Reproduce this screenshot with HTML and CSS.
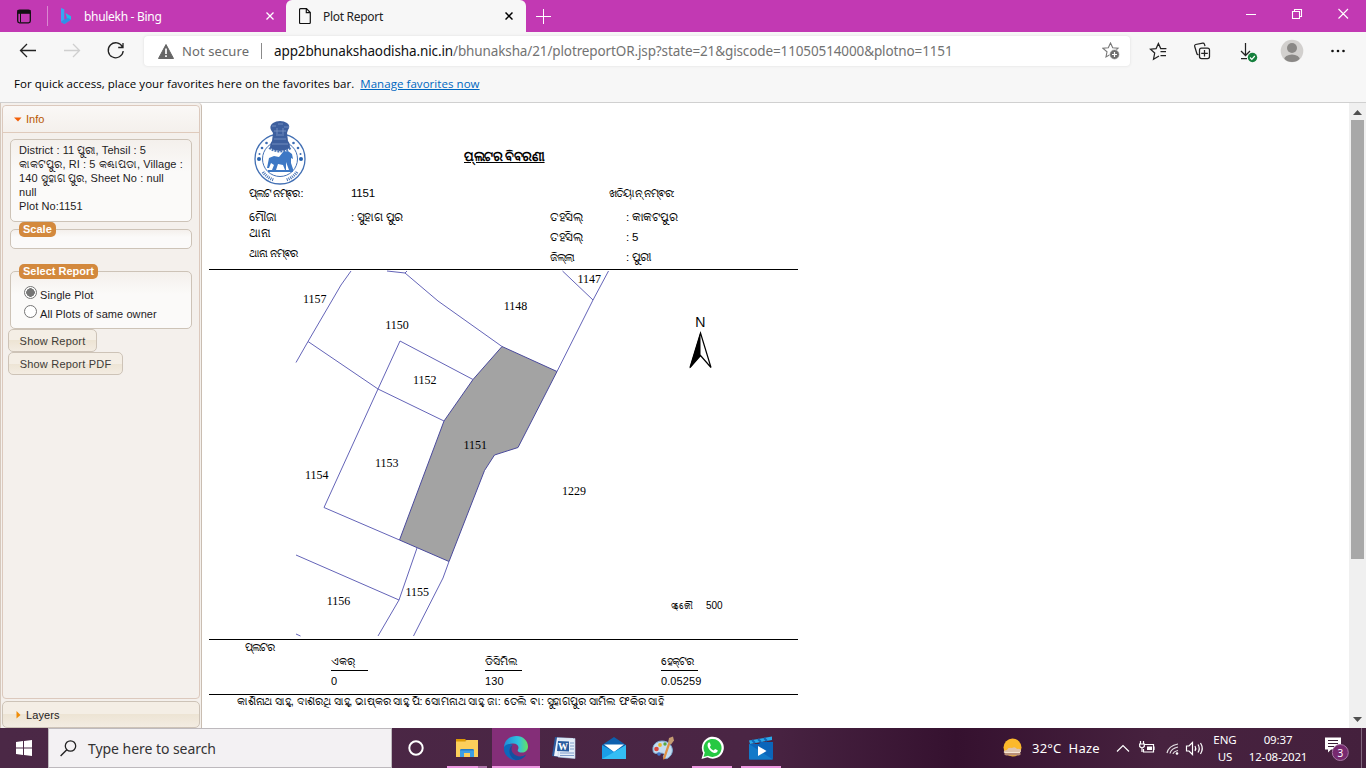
FILE: index.html
```html
<!DOCTYPE html>
<html lang="en">
<head>
<meta charset="utf-8">
<title>Plot Report</title>
<link rel="stylesheet" href="styles.css">
</head>
<body>
<div class="screen">
  <header class="tabs">
    <svg class="tab-actions" width="44" height="32" viewBox="0 0 44 32"><rect x="17.700" y="10.200" width="12.600" height="12.600" rx="1.800" fill="none" stroke="#111" stroke-width="1.300"/><path d="M17.500 10h13v3.800h-13z" fill="#111"/><path d="M20.500 13v9.500" stroke="#111"/></svg>
    <div class="tab tab-idle">
      <svg width="12" height="17" viewBox="0 0 12 17"><path d="M1 0l3.300 1.300v10.200L1 14z" fill="#38a5f3"/><path d="M5.500 5l5.500 3.200v3.300l-6.500 4.500L1 14l6-3.600z" fill="#24b8e8"/><path d="M1 14l3.300-2.500L8 10l3 1.500L4.500 16z" fill="#2f8fe8"/></svg>
      <span class="tab-title t-bing">bhulekh - Bing</span>
      <svg class="x" width="8" height="8" viewBox="0 0 8 8"><path d="M.5.5l7 7M7.500.5l-7 7" stroke="#fff" stroke-width="1.300"/></svg>
    </div>
    <div class="tab tab-open">
      <svg width="12" height="16" viewBox="0 0 12 16"><path d="M1.500.7h6l3.800 3.800v10a1 1 0 0 1-1 1h-8.800a1 1 0 0 1-1-1V1.700a1 1 0 0 1 1-1zM7.300.7v4h4" fill="none" stroke="#111" stroke-width="1.200"/></svg>
      <span class="tab-title t-plot">Plot Report</span>
      <svg class="x" width="8" height="8" viewBox="0 0 8 8"><path d="M.5.5l7 7M7.500.5l-7 7" stroke="#000" stroke-width="1.500"/></svg>
    </div>
    <svg class="newtab" width="15" height="15" viewBox="0 0 15 15"><path d="M7.500 0v15M0 7.500h15" stroke="#fff"/></svg>
    <svg class="winctl" width="104" height="12" viewBox="0 0 104 12"><g fill="none" stroke="#fff" stroke-width="1.100"><path d="M0 6.500h10M46.500 3.500h7v7h-7zM48.500 3.500v-2h7v7h-2M92.500 1l9.500 9.500M102 1l-9.500 9.500"/></g></svg>
  </header>

  <nav class="toolbar">
    <svg class="navicons" width="144" height="38" viewBox="0 0 144 38"><g fill="none" stroke-width="1.300"><path d="M36 18.500H20.500M27 12l-6.500 6.500L27 25" stroke="#222"/><path d="M64 18.500h15.500M73 12l6.500 6.500L73 25" stroke="#cfcfcf"/><path d="M122.500 15a7.500 7.500 0 1 0 .7 4M123 11v4.500h-4.800" stroke="#222"/></g></svg>
    <div class="address">
      <svg width="16" height="15" viewBox="0 0 16 15"><path d="M8 .5L15.500 14.500H.5z" fill="#666" stroke="#666" stroke-linejoin="round"/><path d="M8 4.500v5.500M8 11.200v1.800" stroke="#fff" stroke-width="1.700"/></svg>
      <span class="notsecure">Not secure</span><i class="bar"></i>
      <span class="url"><b>app2bhunakshaodisha.nic.in</b>/bhunaksha/21/plotreportOR.jsp?state=21&amp;giscode=11050514000&amp;plotno=1151</span>
      <svg class="addfav" width="18" height="18" viewBox="0 0 18 18"><path d="M8.500 1l2.200 4.800 5.300.5-3.900 3.500 1 5-4.600-2.500L4 15l1-5.200L1 6.300l5.300-.5z" fill="none" stroke="#777" stroke-width="1.100"/><circle cx="12.500" cy="12.500" r="4.900" fill="#6e6e6e" stroke="#fff" stroke-width=".7"/><path d="M12.500 10v5M10 12.500h5" stroke="#fff" stroke-width="1.200"/></svg>
    </div>
    <svg class="toolicons" width="220" height="38" viewBox="1140 32 220 38"><g fill="none" stroke="#222" stroke-width="1.250">
      <path d="M1159 56l-5.500 3.200 1.200-6.200-4.200-3.800 5.600-.6 2.300-5 2.300 5h5.700M1160.500 51.500h5.500M1160.500 55.500h5.500"/>
      <path d="M1198.500 55l-1.500-1-2.300-7.500q-.5-1.500 1-2l7-1.400q1.300-.2 1.700 1l.6 2"/><rect x="1199.500" y="48" width="10" height="10.500" rx="2"/><path d="M1204.500 50v6.500M1201.200 53.300h6.600"/>
      <path d="M1245.500 43v12M1241 51l4.500 4.500 4.500-4.500M1241 58.500h6"/></g>
      <circle cx="1252.500" cy="57.500" r="4.700" fill="#15803d"/><path d="M1250 57.500l1.800 1.800 3-3.300" fill="none" stroke="#fff" stroke-width="1.200"/>
      <clipPath id="av"><circle cx="1292" cy="51" r="11"/></clipPath><circle cx="1292" cy="51" r="11.300" fill="#d2d0ce"/><g clip-path="url(#av)" fill="#8a8886"><circle cx="1292" cy="48" r="5"/><ellipse cx="1292" cy="60" rx="8" ry="5.600"/></g>
      <g fill="#111"><circle cx="1332.500" cy="51" r="1.300"/><circle cx="1338" cy="51" r="1.300"/><circle cx="1343.500" cy="51" r="1.300"/></g></svg>
  </nav>
  <div class="favbar"><span class="favtext">For quick access, place your favorites here on the favorites bar.</span><a class="favlink">Manage favorites now</a></div>

  <main class="page">
    <aside class="side">
      <section class="panel">
        <h3 class="panel-head"><svg width="8" height="5" viewBox="0 0 8 5"><path d="M0 .5h7.500L4 4.500z" fill="#f35f07"/></svg><span>Info</span></h3>
        <div class="box info">District : 11 ପୁରୀ, Tehsil : 5<br>କାକଟପୁର, RI : 5 କଣ୍ଢାପଡା, Village :<br>140 ସୁହାଗ ପୁର, Sheet No : null<br>null<br>Plot No:1151</div>
        <div class="box scale"><span class="legend">Scale</span></div>
        <div class="box select"><span class="legend">Select Report</span>
          <label class="opt"><i class="radio on"></i><span>Single Plot</span></label>
          <label class="opt"><i class="radio"></i><span>All Plots of same owner</span></label>
        </div>
        <button class="btn b1">Show Report</button>
        <button class="btn b2">Show Report PDF</button>
      </section>
      <h3 class="layers"><svg width="5" height="8" viewBox="0 0 5 8"><path d="M.5 0v7.500L4.500 4z" fill="#ef8c08"/></svg><span>Layers</span></h3>
    </aside>

    <article class="report">
      <div class="head">
        <div class="top">
          <svg class="emblem" width="60" height="68" viewBox="0 0 60 68"><g fill="none" stroke="#4370b4"><circle cx="31" cy="39" r="25" stroke-width="1.300"/><circle cx="31" cy="39" r="17.500"/></g><g fill="#3b6cb4"><circle cx="17.500" cy="23" r="1.300"/><circle cx="13" cy="28" r="1.300"/><circle cx="10.500" cy="34" r="1"/><circle cx="44.500" cy="23" r="1.300"/><circle cx="49" cy="28" r="1.300"/><circle cx="51.500" cy="34" r="1"/></g><path d="M14 52a21 21 0 0 0 11 8M48 52a21 21 0 0 1-11 8" fill="none" stroke="#4773b5" stroke-width="3" stroke-dasharray="1 1"/>
          <path d="M24 3q3-2 7-2t7 2q4 3 1 7l-1 3 1 8q2 2 2 7-10 6-20 0 0-5 2-7l1-8-2-3q-2-4 2-7z" fill="#3d5f9e"/><path d="M23 6h4M29 4h5M35 7h5M25 11h12M27 15h8M25 19h12M23 24h16M28 8v6M34 8v6" stroke="#7d97c6" stroke-width=".8"/><path d="M20 28q11 7 22 0" fill="none" stroke="#4773b5" stroke-width="2" stroke-dasharray="2 1"/>
          <path d="M20 38l5-2 5 1 4-5 5-1 4 3 1 5-2-1v5l2 6v3H19v-2h4l2-5-3-2-2 5h-2zM29 44l-2 6h9l-2-5zM37 42v8h3z" fill="#3d78c5" fill-rule="evenodd"/><circle cx="10" cy="39" r="2" fill="#2862ae"/><circle cx="52" cy="39" r="2" fill="#2862ae"/></svg>
          <h1 class="title">ପ୍ଲଟର ବିବରଣୀ</h1>
        </div>
        <div class="plot"><span class="c1 tighter">ପ୍ଲଟ ନମ୍ଵର :</span><span class="c2 en">1151</span><span class="c3 tight">ଖତିୟାନ୍ ନମ୍ଵର:</span></div>
        <div class="details">
          <dl class="left"><dt>ମୌଜା</dt><dd>: ସୁହାଗ ପୁର</dd><dt>ଥାନା</dt><dd></dd><dt class="tight">ଥାନା ନମ୍ଵର</dt><dd></dd></dl>
          <dl class="right"><dt>ତହସିଲ୍</dt><dd>: କାକଟପୁର</dd><dt>ତହସିଲ୍</dt><dd class="en">: 5</dd><dt class="tighter">ଜିଲ୍ଲା</dt><dd>: ପୁରୀ</dd></dl>
        </div>
      </div>
      <svg class="map" width="589" height="369" viewBox="209 270 589 369">
        <path d="M502 346.500L557 371.500 518 447.500 494.500 455 484.500 470.500 449 561.500 399.500 540 444 421 473 379.500z" fill="#a3a3a3" stroke="#4a4a9c"/>
        <g fill="none" stroke="#6464b8">
          <path d="M351 271L341 285 308 341.500 296 362.500M308 341.500L378 389 444 421M387 271L405 273 407 271M405 273L438 301 502 346.500M473 379.500L400 341 378 389 324 507.500 399.500 540M562.500 271L593 300M608.500 271L593 300 557 371.500M417 548L399 600 378 636M296 555L399 600M449 561.500L443 578 413.500 636M296 634L300.500 636"/>
        </g>
        <g class="nums"><text x="303" y="303">1157</text><text x="385.300" y="329">1150</text><text x="503.800" y="309.500">1148</text><text x="577.500" y="282.500">1147</text><text x="413" y="384">1152</text><text x="463.500" y="449">1151</text><text x="375" y="467">1153</text><text x="305" y="479">1154</text><text x="562" y="495">1229</text><text x="405.500" y="596">1155</text><text x="326.800" y="605">1156</text></g>
        <text class="north" x="695" y="327">N</text>
        <path d="M700.500 333L711 367.500 700.500 355.500 690 367.500z" fill="#fff" stroke="#000" stroke-width="1.200"/><path d="M700.500 332v23.500L689.500 368.500z"/>
        <text class="scaletxt od" x="671" y="609">ସ୍କେୌ</text><text class="scaletxt" x="706" y="609">500</text>
      </svg>
      <div class="area">
        <div class="area-title tighter">ପ୍ଲଟର</div>
        <div class="cols">
          <div class="col"><span class="cap">ଏକର୍</span><span class="val">0</span></div>
          <div class="col"><span class="cap">ଡିସିମିଲ</span><span class="val">130</span></div>
          <div class="col"><span class="cap hect">ହେକ୍ଟର</span><span class="val">0.05259</span></div>
        </div>
      </div>
      <p class="owners">କାଶିନାଥ ସାହୁ, ଦାଶରଥି ସାହୁ, ଭାଷ୍କର ସାହୁ ପି: ସୋମନାଥ ସାହୁ ଜା: ତେଲି ବା: ସୁହାଗପୁର ସାମିଲ ଫକିର ସାହି</p>
    </article>

    <div class="scroll"><svg width="9" height="5" viewBox="0 0 9 5"><path d="M0 5L4.500 0 9 5z" fill="#505050"/></svg><i class="thumb"></i><svg class="down" width="9" height="5" viewBox="0 0 9 5"><path d="M0 0h9L4.500 5z" fill="#505050"/></svg></div>
  </main>

  <footer class="taskbar">
    <div class="start"><svg width="16" height="16" viewBox="0 0 16 16"><path d="M0 2l7-1v6.500H0zM8 1l8-1v7.500H8zM0 8.500h7V15l-7-1zM8 8.500h8V16l-8-1z" fill="#fff"/></svg></div>
    <div class="search"><svg width="17" height="17" viewBox="0 0 17 17"><circle cx="10.500" cy="6" r="5.200" fill="none" stroke="#222" stroke-width="1.300"/><path d="M6.800 9.700L.6 16" stroke="#222" stroke-width="1.400"/></svg><span>Type here to search</span></div>
    <div class="apps">
      <div class="app cortana"><svg width="18" height="18" viewBox="0 0 18 18"><circle cx="9" cy="9" r="6.700" fill="none" stroke="#fff" stroke-width="2"/></svg></div>
      <div class="app run files"><svg width="22" height="20" viewBox="0 0 22 20"><path d="M0 1h9l2 2h-2v4H0z" fill="#dc9a05"/><path d="M0 3.500h9L10.500 2H22v17H0z" fill="#fccf5b"/><path d="M4 19v-6.500q0-1.500 1.500-1.500h11q1.500 0 1.500 1.500V19h-4v-4H8v4z" fill="#3d9ee4"/><path d="M5.500 11h11q1.500 0 1.500 1.500H4q0-1.500 1.500-1.500z" fill="#277bc2"/></svg></div>
      <div class="app run edge"><svg width="26" height="26" viewBox="0 0 26 26"><defs><linearGradient id="e1" x1="0" x2="1"><stop offset="0" stop-color="#218bd8"/><stop offset=".6" stop-color="#2fc2df"/><stop offset="1" stop-color="#66e35f"/></linearGradient></defs><path d="M1 13C1 5 7 1 13.500 1 20 1 25 6 25 11.500c0 4-3 6-6 6-3.500 0-5-1.500-4-3 1.500-3-.5-6-5-6-4 0-7 2-9 4.500z" fill="url(#e1)"/><path d="M1 12c2-3 6-4 9-2-3 1-4 4-3 7 1.500 4.500 7 7 14 4-4 5-10 5-14 2.500C2.500 21 .5 17 1 12z" fill="#0c68bc"/><path d="M10 10c-2 2-2 6 0 8 3 4 9 4.500 13 1.500-1 3-6 6-10 5.500-7-2-9-11-3-15z" fill="#1450a0"/></svg></div>
      <div class="app word"><svg width="24" height="24" viewBox="0 0 24 24"><path d="M3 1L15 2v20L0 20z" fill="#2c5b9d"/><path d="M5 1.500l16 .5V22L2 20z" fill="#edf3fc"/><path d="M7 3l16-.5v20L6 21z" fill="#e5edf8" stroke="#b9cce6" stroke-width=".6"/><path d="M18 7h4M18 10h4M18 13h4M8 17h14M8 19.500h14" stroke="#7f9dcc"/><path d="M6 5l11 .5v10L5 15z" fill="#285a9e"/><text class="wordw" x="6" y="14">W</text></svg></div>
      <div class="app"><svg width="24" height="24" viewBox="0 0 24 24"><path d="M0 9l12-8 12 8-12 9z" fill="#0d60ae"/><path d="M2 8.500h20L12 16z" fill="#fff"/><path d="M0 9l12 7L24 9v14H0z" fill="#1b9de6"/><path d="M24 9v14H0l14-8z" fill="#34bdf4"/></svg></div>
      <div class="app"><svg width="24" height="24" viewBox="0 0 24 24"><path d="M2 14C1 7 9 3 16 6c7 4 7 12 1 16-3 2-6-1-4-3 1-2-3-2-6-2-3 1-5 0-5-3z" fill="#c5ddf1" stroke="#7cadd3"/><circle cx="5.500" cy="13" r="2.300" fill="#da473c"/><circle cx="9" cy="9" r="1.900" fill="#e9b82b"/><circle cx="14" cy="8" r="1.700" fill="#57a942"/><circle cx="8" cy="18" r="1.800" fill="#4077cf"/><path d="M19.500 7L14 23l-2 .5.500-3L17.500 6z" fill="#df9043"/><path d="M17 7l1-5 4-1.500 1 4-3 4z" fill="#c49b72"/></svg></div>
      <div class="app run"><svg width="24" height="24" viewBox="0 0 24 24"><path d="M1.500 23l1.700-6A11 11 0 1 1 7.500 21.300z" fill="#fff"/><path d="M3.500 21l1.300-4.500a9 9 0 1 1 3.200 3.200z" fill="#26c943"/><path d="M8.700 6.500c-3 2.500.5 8.500 4.800 10.300 2 .8 4.500-.8 4.200-2.500l-2.600-1.300-1.500 1.500c-2-.8-3-2-3.800-3.500l1-1.500-1-3z" fill="#fff"/></svg></div>
      <div class="app run"><svg width="24" height="24" viewBox="0 0 24 24"><path d="M0 4.500L23 .5V4L1 8z" fill="#29a9ea"/><path d="M3 4l3 3M9 3l3 3M15 2l3 3" stroke="#1266b8" stroke-width="2"/><path d="M0 8h10l2-2h12v16.500q0 1-1 1H1q-1 0-1-1z" fill="#0b65ba"/><path d="M0 8l24 15.500H1q-1 0-1-1z" fill="#127ac9"/><path d="M9 10v10l8.500-5z" fill="#fff"/></svg></div>
    </div>
    <div class="tray">
      <svg width="22" height="20" viewBox="0 0 22 20"><circle cx="10.500" cy="9.500" r="9" fill="#fcb92b"/><path d="M2 15q-1-3 3-3 1-3 5-2 3-2 5 1 4-1 4 2 0 2-3 2z" fill="#dfc5ae"/><path d="M4 17.500q-3-1-1-2.500h15q2 1.500-1 2.500z" fill="#b98f78"/><path d="M3 14.500h15" stroke="#f6e6d4"/></svg>
      <span class="weather">32°C&nbsp; Haze</span>
      <svg class="sys" width="90" height="18" viewBox="1115 739 90 18"><g fill="none" stroke="#fff" stroke-width="1.200"><path d="M1117 751.500l6-6 6 6M1144.500 744.500h9v7.500h-10v-3M1154 746.500v3.500"/><path d="M1139 744h6M1140.500 741v3M1143.500 741v3M1139.700 744v2.500q2.300 2.500 4.600 0V744M1142 748v4"/><path d="M1167 753q1.500-7 11-9M1170 753.500q1-5 8-6.500M1173 754q.5-2.500 5-3.500" opacity=".85"/><path d="M1186.500 746h2.500l3.500-3.500v12l-3.500-3.500h-2.500zM1195 746q1.500 2.500 0 5M1198 744.500q2.500 4 0 8M1200.500 743q3.500 5.500 0 11"/></g><path d="M1147 746.500h5v3.500h-5z" fill="#fff"/><circle cx="1177" cy="753.500" r="1.300" fill="#fff"/></svg>
      <span class="lang">ENG<br>US</span><span class="clock">09:37<br>12-08-2021</span>
      <svg class="notif" width="28" height="30" viewBox="1322 736 28 30"><path d="M1325 740.500h16v12h-10l-3 3v-3h-3z" fill="#fff"/><path d="M1328 743.500h10M1328 746.500h10M1328 749.500h6" stroke="#3a2038"/><circle cx="1340.300" cy="755.500" r="8" fill="#77296f" stroke="#a579a3"/><text x="1337.500" y="759.500" class="badge">3</text></svg>
      <i class="peek"></i>
    </div>
  </footer>
</div>
</body>
</html>
```
FILE: styles.css
```css
* { box-sizing: border-box; }
body { margin: 0; overflow: hidden; }
svg { display: block; flex: none; }
span { white-space: nowrap; }
i { display: block; flex: none; }
.screen { width: 1366px; height: 768px; display: flex; flex-direction: column; background: #f7f7f7; font-family: "Noto Sans", sans-serif; }

.tabs { height: 32px; flex: none; background: #c239b3; display: flex; align-items: center; }
.tab { display: flex; align-items: center; height: 32px; font-size: 12px; }
.tab-idle { width: 242px; color: #fff; padding: 0 12px 0 3px; }
.tab-idle::before { content: ""; width: 1px; height: 20px; background: #da88d1; margin-right: 12px; }
.tab-open { width: 240px; background: #f7f7f7; color: #222; border-radius: 6px 6px 0 0; padding: 0 13px; }
.tab-title { letter-spacing: -.3px; }
.t-bing { margin-left: 12px; }
.t-plot { margin-left: 12px; }
.x { margin-left: auto; }
.newtab { margin-left: 10px; }
.winctl { margin-left: auto; margin-right: 16px; margin-bottom: 4px; }

.toolbar { height: 38px; flex: none; display: flex; align-items: center; }
.address { width: 986px; height: 30px; background: #fff; border-radius: 4px; box-shadow: 0 0 3px #ddd; display: flex; align-items: center; padding: 0 10px 0 14px; margin-right: 10px; }
.notsecure { font-size: 13px; color: #6b6b6b; margin-left: 8px; width: 67px; letter-spacing: .1px; }
.bar { width: 1px; height: 16px; background: #8a8a8a; margin: 0 12px; }
.url { font-size: 13.500px; color: #737373; letter-spacing: -.12px; }
.url b { font-weight: 400; color: #111; }
.addfav { margin-left: auto; }
.favbar { height: 33px; flex: none; border-bottom: 1px solid #d0d0d0; display: flex; align-items: center; padding: 0 0 5px 14px; font-size: 11.500px; font-family: "Open Sans", sans-serif; font-weight: 500; color: #000; letter-spacing: .05px; }
.favlink { color: #0067c0; text-decoration: underline; margin-left: 6px; }

.page { height: 625px; flex: none; display: flex; background: #fff; font-family: "Liberation Sans", sans-serif; }
.side { width: 202px; background: #f4f0ec; padding: 2px 1px 0 1px; border-right: 1px solid #c9bdb1; border-left: 1px solid #d5c8bc; display: flex; flex-direction: column; border-top-right-radius: 4px; font-size: 11px; color: #1e1b1d; }
.panel { height: 594px; border: 1px solid #dcc9bd; border-radius: 4px; padding: 0 9px 0 7px; background: #f4f0ec; }
h3 { margin: 0; font-size: 11px; font-weight: 400; display: flex; align-items: center; }
.panel-head { height: 27px; margin: 0 -9px 0 -7px; padding-left: 11px; gap: 4px; color: #b85700; border-bottom: 1px solid #dfcabb; background: linear-gradient(#faf8f6, #f4f0ec); border-radius: 4px 4px 0 0; }
.box { border: 1px solid #cdc3b7; border-radius: 5px; background: linear-gradient(#f4f0ec, #fbfaf9 40%); width: 182px; }
.info { height: 83px; margin-top: 6px; padding: 3px 8px; line-height: 14px; white-space: nowrap; letter-spacing: .08px; }
.legend { display: inline-block; background: #d3893d; color: #fff; font-weight: 700; height: 15px; line-height: 15px; border-radius: 5px; padding: 0 4px; margin-left: 8px; }
.scale { height: 20px; margin-top: 7px; }
.scale .legend, .select .legend { margin-top: -8px; vertical-align: top; }
.select { height: 58px; margin-top: 22px; }
.opt { display: flex; gap: 3px; height: 19px; align-items: center; padding-left: 13px; position: relative; top: -1px; letter-spacing: .08px; }
.opt span { padding-top: 4px; }
.radio { width: 13px; height: 13px; border: 1px solid #767676; border-radius: 50%; background: #fff; }
.radio.on { background: radial-gradient(circle, #767676 0 4px, #fff 4.500px); }
.btn { display: block; height: 23px; margin-left: -2px; border: 1px solid #cdc3b7; border-radius: 5px; background: linear-gradient(#f4eee5 50%, #ede4d4 50%, #f3ece2); color: #403b37; font: 11px "Liberation Sans", sans-serif; padding: 0; letter-spacing: .2px; }
.b1 { width: 89px; }
.b2 { width: 115px; }
.layers { height: 27px; margin-top: 2px; border: 1px solid #cdc3b7; border-radius: 5px; background: linear-gradient(#f4eee5 50%, #ede4d4 50%, #f3ece2); padding-left: 13px; gap: 5px; letter-spacing: .1px; }

.report { width: 596px; padding-left: 7px; font-size: 11.500px; letter-spacing: -.3px; color: #000; }
.head { height: 167px; border-bottom: 1px solid #000; }
.top { height: 83px; padding-left: 40px; display: flex; }
.emblem { margin-top: 17px; }
.title { margin: 43px 0 0 155px; font-size: 13px; letter-spacing: -.45px; font-weight: 700; line-height: 22px; height: 22px; text-decoration: underline; white-space: nowrap; }
.plot { height: 15px; line-height: 15px; display: flex; padding-left: 40px; }
.c1 { width: 102px; }
.c2 { width: 258px; }
.en { font-size: 11.500px; letter-spacing: -.2px; }
.tight { font-size: 11px; letter-spacing: -.8px; }
.tighter { font-size: 11px; letter-spacing: -1.300px; }
.details { display: flex; padding: 6px 0 0 40px; }
dl { margin: 0; display: grid; align-items: center; }
dt, dd { margin: 0; white-space: nowrap; line-height: 12px; }
.left { width: 301px; grid-template-columns: 102px auto; grid-template-rows: 20px 12px 28px; }
.right { grid-template-columns: 76px auto; grid-template-rows: 20px 20px 20px; }
.nums { font: 12px "Liberation Serif", serif; letter-spacing: 0; }
.north { font: 14px "Noto Sans", sans-serif; }
.scaletxt { font: 10px "Liberation Sans", sans-serif; letter-spacing: 0; }
.scaletxt.od { font-size: 9px; letter-spacing: -3px; }
.area { height: 56px; border: solid #000; border-width: 1px 0; }
.area-title { height: 13px; line-height: 15px; padding-left: 36px; }
.cols { display: grid; grid-template-columns: 154px 176px auto; padding-left: 122px; }
.cap, .val { display: block; font-size: 11px; line-height: 16px; letter-spacing: 0; }
.cap { width: 37px; height: 18px; border-bottom: 1px solid #000; letter-spacing: -.1px; }
.hect { letter-spacing: -1px; }
.val { line-height: 20px; letter-spacing: .1px; }
.owners { margin: 0; padding-left: 28px; font-size: 11px; letter-spacing: -.18px; line-height: 13px; white-space: nowrap; }
.scroll { width: 17px; margin-left: auto; background: #f0f0f0; padding: 7px 0 6px; display: flex; flex-direction: column; align-items: center; }
.thumb { width: 13px; height: 439px; background: #a8a8a8; margin-top: 5px; }
.down { margin-top: auto; }

.taskbar { height: 40px; flex: none; background: linear-gradient(90deg, #4b2846, #4a2544 55%, #35112f 70%, #47223f 85%, #44203d); display: flex; color: #fff; }
.start { width: 48px; display: grid; place-items: center; }
.search { width: 344px; background: #f3f1f3; border: 1px solid #bdb9bd; display: flex; align-items: center; padding-left: 11px; gap: 11px; color: #333; font-size: 14px; letter-spacing: -.05px; }
.apps { display: flex; gap: 1px; }
.app { width: 48px; display: grid; place-items: center; }
.files { margin-left: 2px; }
.run { background: linear-gradient(#ed98e1, #ed98e1) center bottom / 40px 2px no-repeat; }
.files { background: linear-gradient(90deg, #ed98e1 31px, #ae74a8 31px) center bottom / 40px 2px no-repeat; }
.edge { background: linear-gradient(#ed98e1, #ed98e1) center bottom / 48px 2px no-repeat #842e78; }
.word { padding-right: 3px; }
.wordw { font: bold 10px "Liberation Serif", serif; fill: #fff; }
.tray { margin-left: auto; display: flex; align-items: center; font-size: 12px; }
.weather { font-size: 13px; margin-left: 8px; width: 70px; letter-spacing: .2px; }
.sys { margin-left: 13px; }
.lang, .clock { text-align: center; line-height: 17px; font-size: 11.500px; margin-bottom: 1px; }
.lang { width: 24px; margin-left: 8px; }
.clock { width: 60px; margin-left: 11px; letter-spacing: -.15px; }
.notif { margin-left: 14px; }
.badge { font: 10px "Noto Sans", sans-serif; fill: #fff; }
.peek { width: 1px; height: 40px; background: #80677d; margin: 0 4px 0 11px; }
```
